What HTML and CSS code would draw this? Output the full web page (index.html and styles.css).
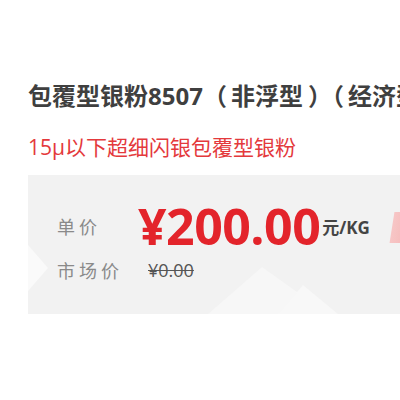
FILE: index.html
```html
<!DOCTYPE html>
<html lang="zh">
<head>
<meta charset="utf-8">
<link rel="stylesheet" href="styles.css">
</head>
<body>
<div class="page">
  <h1 class="title">包覆型银粉8507<span class="po">（</span>非浮型<span class="pc">）</span><span class="po">（</span>经济型<span class="pc">）</span></h1>
  <p class="subtitle">15μ以下超细闪银包覆型银粉</p>
  <div class="panel">
    <svg class="panel-bg" width="400" height="139" viewBox="0 0 400 139" aria-hidden="true">
      <polygon points="0,70 20,93 0,116" fill="#fafafa"/>
      <polygon points="180,139 234,92 300,139" fill="#f7f7f7"/>
      <polygon points="250,139 275,110 310,139" fill="#f8f8f8"/>
    </svg>
    <div class="tag" aria-hidden="true"></div>
    <div class="row price-row">
      <span class="label">单价</span>
      <span class="price">¥200.00</span><span class="unit">元/KG</span>
    </div>
    <div class="row market-row">
      <span class="label">市场价</span>
      <span class="market">¥0.00</span>
    </div>
  </div>
</div>
</body>
</html>
```
FILE: styles.css
```css
html, body {
  margin: 0;
  padding: 0;
  background: #ffffff;
}
.page {
  width: 400px;
  height: 400px;
  overflow: hidden;
  padding-left: 28px;
  padding-top: 78px;
  box-sizing: border-box;
  font-family: "Noto Sans CJK SC", "Open Sans", sans-serif;
}
.title {
  margin: 0;
  font-size: 24px;
  font-weight: 700;
  line-height: 36px;
  color: #3f3f3f;
  white-space: nowrap;
  font-family: "Open Sans", "Noto Sans CJK SC", sans-serif;
}
.po {
  margin-right: 4px;
}
.pc {
  margin-left: 5px;
}
.subtitle {
  margin: 19px 0 0;
  font-size: 21px;
  line-height: 28px;
  color: #e4393c;
  white-space: nowrap;
  font-family: "Open Sans", "Noto Sans CJK SC", sans-serif;
}
.panel {
  position: relative;
  margin-top: 14px;
  width: 420px;
  height: 139px;
  background: #f2f2f2;
  padding-left: 29px;
  padding-top: 25px;
  box-sizing: border-box;
}
.panel-bg {
  position: absolute;
  left: 0;
  top: 0;
}
.tag {
  position: absolute;
  left: 364px;
  top: 37px;
  width: 36px;
  height: 31px;
  background: linear-gradient(90deg, #f7c6c6, #f3a9a9);
  transform: skewX(-9deg);
}
.row {
  position: relative;
  display: flex;
  align-items: center;
  white-space: nowrap;
}
.price-row {
  height: 52px;
}
.label {
  font-size: 18px;
  line-height: 28px;
  color: #8a8a8a;
  letter-spacing: 4px;
}
.price-row .label {
  width: 81px;
}
.market-row .label {
  width: 91px;
}
.price {
  font-family: "Open Sans", sans-serif;
  font-weight: 700;
  font-size: 50px;
  line-height: 52px;
  color: #e3242b;
  letter-spacing: -0.5px;
}
.unit {
  font-family: "Open Sans", "Noto Sans CJK SC", sans-serif;
  font-weight: 700;
  font-size: 17px;
  line-height: 24px;
  color: #444444;
  margin-left: 2px;
  margin-top: 4px;
}
.market-row {
  margin-top: 4px;
  height: 28px;
}
.market {
  font-family: "Open Sans", sans-serif;
  font-size: 18px;
  line-height: 28px;
  color: #555555;
  text-decoration: line-through;
}
```
